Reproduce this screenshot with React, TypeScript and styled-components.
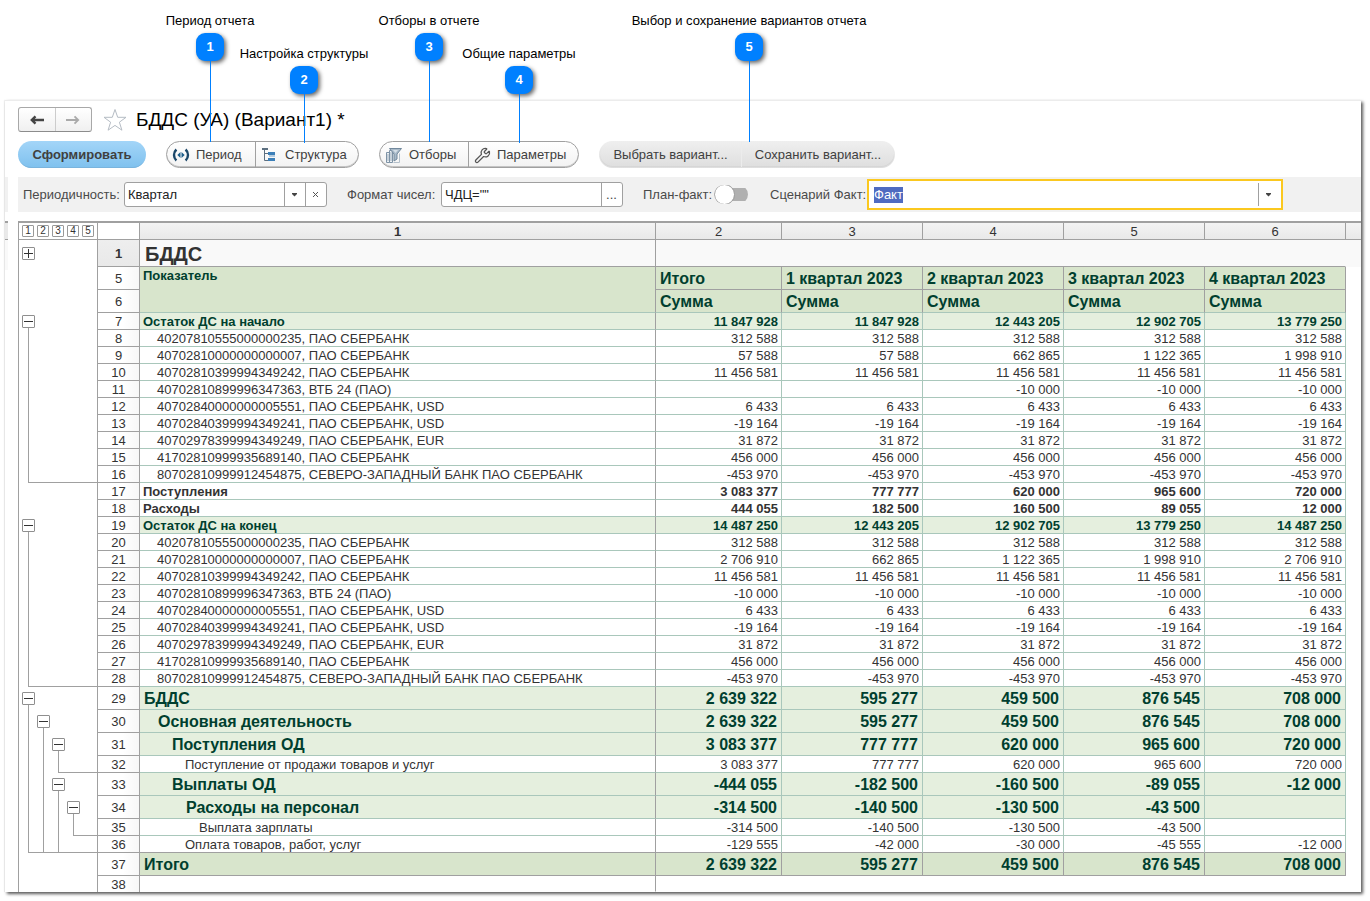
import React, { useEffect, useRef } from "react";
import styled, { createGlobalStyle, css } from "styled-components";
import { Wrench } from "lucide-react";

const GRAY = "#a0a0a0";
const GREEN_LINE = "#a9c7bb";
const GREEN_TEXT = "#003f2f";

const GlobalStyle = createGlobalStyle`
  * { box-sizing: border-box; }
  body {
    margin: 0;
    background: #fff;
    color: #333;
    font: 13px/16px "Liberation Sans", Arial, sans-serif;
  }
  button, input { font: inherit; color: inherit; margin: 0; }
`;

const Page = styled.div`
  position: relative;
  padding: 100px 9px 9px 5px;
  min-width: 1200px;
`;

/* Numbered callouts over the window */

const CalloutBox = styled.div<{ $center: number; $low?: boolean }>`
  position: absolute;
  z-index: 2;
  top: ${(p) => (p.$low ? 46 : 13)}px;
  left: ${(p) => p.$center - 134}px;
  width: 268px;
  display: flex;
  flex-direction: column;
  align-items: center;
  gap: 4px;
  color: #000;
  white-space: nowrap;
  pointer-events: none;
`;

const Badge = styled.span<{ $tail: number }>`
  position: relative;
  width: 28px;
  height: 28px;
  border-radius: 9px;
  background: #0080ff;
  box-shadow: 2px 2px 4px rgba(0, 0, 0, 0.6);
  color: #fff;
  font-weight: bold;
  line-height: 28px;
  text-align: center;

  &::after {
    content: "";
    position: absolute;
    top: 28px;
    left: 14px;
    width: 1px;
    height: ${(p) => p.$tail}px;
    background: #0080ff;
  }
`;

/* Application window */

const Window = styled.main`
  border-top: 1px solid #ececec;
  background: #fff;
  box-shadow: 2px 2px 3px rgba(0, 0, 0, 0.65), -1px 0 1px rgba(0, 0, 0, 0.06);
`;

const TitleRow = styled.header`
  display: flex;
  align-items: center;
  padding: 6px 13px 0;
  height: 31px;
`;

const NavGroup = styled.div`
  display: flex;
  width: 74px;
  height: 25px;
  border: 1px solid #a8a8a8;
  border-bottom-color: #8c8c8c;
  border-radius: 3px;
  background: linear-gradient(#fff, #f0f0f0);
`;

const NavButton = styled.button`
  flex: 1;
  display: flex;
  align-items: center;
  justify-content: center;
  padding: 0;
  border: 0;
  background: none;

  & + & { border-left: 1px solid #ccc; }
`;

const StarButton = styled.button`
  display: flex;
  margin: 0 9px 0 11px;
  padding: 0;
  border: 0;
  background: none;
`;

const Title = styled.h1`
  margin: 0;
  color: #000;
  font-size: 19px;
  line-height: 24px;
  font-weight: normal;
`;

const CommandBar = styled.div`
  display: flex;
  gap: 20px;
  padding: 9px 13px;
`;

const pill = css`
  height: 27px;
  border-radius: 14px;
`;

const PrimaryButton = styled.button`
  ${pill}
  width: 128px;
  padding: 1px 0 0;
  border: 0;
  background: linear-gradient(#a3d5f8, #7fc1ee);
  box-shadow: inset 0 -2px 0 -1px #7ab4dd;
  color: #404040;
  font-weight: bold;
`;

const ButtonGroup = styled.div<{ $flat?: boolean }>`
  ${pill}
  display: flex;
  border: 1px solid ${(p) => (p.$flat ? "transparent" : GRAY)};
  background: ${(p) => (p.$flat ? "linear-gradient(#efefef, #dedede) border-box" : "linear-gradient(#fff, #f2f2f2)")};
  box-shadow: inset 0 -1px 0 ${(p) => (p.$flat ? "#d6d6d6" : "#c4c4c4")};
`;

const GroupButton = styled.button<{ $width: number; $flat?: boolean }>`
  display: flex;
  align-items: center;
  justify-content: ${(p) => (p.$flat ? "center" : "flex-start")};
  gap: 6px;
  width: ${(p) => p.$width}px;
  padding: 1px 5px 0;
  border: 0;
  background: none;
  color: #404040;
  white-space: nowrap;

  &:not(:first-child) { border-left: 1px solid ${(p) => (p.$flat ? "#ececec" : GRAY)}; }
`;

const Split = styled.div`
  display: grid;
  grid-template-columns: 3px minmax(0, 1fr);
  column-gap: 10px;
`;

const GutterShade = styled.div`
  background: #f1f1f1;
`;

const GutterHead = styled.div`
  height: 49px;
  border-top: 2px solid ${GRAY};
  background: linear-gradient(#e9e9e9 16px, ${GRAY} 16px, ${GRAY} 17px, #f9f9f9 17px);
`;

const Params = styled.div`
  display: flex;
  align-items: center;
  gap: 20px;
  height: 35px;
  padding: 0 78px 0 5px;
  background: #f1f1f1;
`;

const Param = styled.div<{ $grow?: boolean }>`
  display: flex;
  align-items: center;
  flex: ${(p) => (p.$grow ? "1" : "none")};
`;

const ParamLabel = styled.label<{ $width: number }>`
  width: ${(p) => p.$width}px;
  color: #4a4a4a;
  white-space: nowrap;
`;

const Field = styled.div<{ $width?: number; $active?: boolean }>`
  display: flex;
  flex: ${(p) => (p.$width ? "none" : "1")};
  width: ${(p) => (p.$width ? p.$width + "px" : "auto")};
  height: ${(p) => (p.$active ? 31 : 25)}px;
  padding: ${(p) => (p.$active ? "2px" : "0")};
  border: ${(p) => (p.$active ? "2px solid #fbc81f" : "1px solid " + GRAY)};
  border-radius: ${(p) => (p.$active ? 0 : 3)}px;
  background: #fff;
`;

const FieldInput = styled.input`
  flex: 1;
  min-width: 0;
  padding: 0 3px;
  border: 0;
  outline: 0;
  background: none;
  color: #222;

  &::selection { background: #4f6bc0; color: #fff; }
`;

const FieldButton = styled.button`
  display: flex;
  align-items: center;
  justify-content: center;
  width: 21px;
  padding: 0 1px 0 0;
  border: 0;
  border-left: 1px solid ${GRAY};
  background: none;
  color: #444;
`;

const Switch = styled.input`
  appearance: none;
  display: flex;
  align-items: center;
  width: 34px;
  height: 19px;
  margin-right: 2px;
  background: linear-gradient(#b0b0b0, #b0b0b0) 6px 3px / 28px 13px no-repeat;
  border-radius: 10px;
  overflow: hidden;

  &::before {
    content: "";
    width: 19px;
    height: 19px;
    border: 1px solid #999;
    border-radius: 50%;
    background: #fff;
  }
`;

/* Spreadsheet */

const SheetArea = styled.section`
  margin-top: 9px;
`;

const Sheet = styled.table`
  width: 100%;
  table-layout: fixed;
  border-collapse: separate;
  border-spacing: 0;
  border-top: 2px solid ${GRAY};

  td, th { padding: 0; font-weight: normal; white-space: nowrap; overflow: hidden; }
`;

const Col = styled.col<{ $width?: number }>`
  width: ${(p) => (p.$width ? p.$width + "px" : "auto")};
`;

const OutlineCell = styled.td<{ $head?: boolean }>`
  border-left: 1px solid ${GRAY};
  border-right: 1px solid ${GRAY};
  ${(p) => p.$head && `border-bottom: 1px solid ${GRAY};`}
`;

const Lanes = styled.div<{ $height: number }>`
  display: grid;
  grid-template-columns: repeat(4, 15px) 16px;
  height: ${(p) => p.$height}px;
  padding-left: 2px;
`;

const line = `linear-gradient(${GRAY}, ${GRAY})`;
const laneFill: Record<string, string> = {
  ".": "none",
  "+": "none",
  "-": `${line} 7px 100% / 1px 50% no-repeat`,
  "|": `${line} 7px 0 / 1px 100% no-repeat`,
  L: `${line} 7px 0 / 1px 100% no-repeat, ${line} 7px 100% / 8px 1px no-repeat`,
  T: `${line} 7px 0 / 1px 100% no-repeat, ${line} 0 100% / 15px 1px no-repeat`,
  _: `${line} 0 100% / 16px 1px no-repeat`,
};

const Lane = styled.div<{ $kind: string }>`
  display: flex;
  align-items: center;
  padding-left: 1px;
  background: ${(p) => laneFill[p.$kind]};
`;

const Toggle = styled.button`
  display: flex;
  align-items: center;
  justify-content: center;
  width: 13px;
  height: 13px;
  padding: 0;
  border: 1px solid #8f8f8f;
  border-radius: 1px;
  background: #fff;
`;

const LevelButton = styled(Toggle)`
  width: 12px;
  height: 12px;
  border-color: #999;
  font-size: 10px;
  line-height: 10px;
`;

const ColumnHead = styled.th<{ $bold?: boolean; $plain?: boolean }>`
  height: 17px;
  border-right: 1px solid ${GRAY};
  border-bottom: 1px solid ${GRAY};
  background: ${(p) => (p.$plain ? "#fff" : "linear-gradient(#f3f3f3, #e9e9e9)")};
  line-height: 14px;

  &&& { padding-top: 2px; font-weight: ${(p) => (p.$bold ? "bold" : "normal")}; }
  &:last-child { border-right: 0; }
`;

const RowHead = styled.th<{ $current?: boolean; $last?: boolean }>`
  border-right: 1px solid ${GRAY};
  border-bottom: ${(p) => (p.$last ? "0" : `1px solid ${GRAY}`)};
  background: ${(p) => (p.$current ? "linear-gradient(#eee, #e9e9e9)" : "linear-gradient(90deg, #fff 60%, #f7f7f7)")};
  line-height: 14px;

  &&& { padding-top: 2px; font-weight: ${(p) => (p.$current ? "bold" : "normal")}; }
`;

type Tone = "title" | "head" | "group" | "big" | "bold" | "plain" | "total" | "empty";

const tones: Record<Tone, ReturnType<typeof css>> = {
  title: css`background: #f9f9f9; font-size: 20px; line-height: 24px; --edge: ${GRAY}; --pad: 5px;`,
  head: css`background: #d8e5cc; color: ${GREEN_TEXT}; font-size: 16px; line-height: 20px; --edge: ${GRAY}; --pad: 4px;`,
  group: css`background: #e5efde; color: ${GREEN_TEXT};`,
  big: css`background: #e5efde; color: ${GREEN_TEXT}; font-size: 16px; line-height: 20px; --pad: 4px;`,
  bold: css``,
  plain: css``,
  total: css`background: #d8e5cc; color: ${GREEN_TEXT}; font-size: 16px; line-height: 20px; --edge: ${GRAY}; --pad: 4px;`,
  empty: css`--edge: transparent;`,
};

const Cell = styled.td<{ $tone: Tone; $strong?: boolean; $closing?: boolean }>`
  --edge: ${GREEN_LINE};
  --pad: 3px;
  line-height: 14px;
  ${(p) => tones[p.$tone]}
  border-right: 1px solid var(--edge);
  border-bottom: 1px solid ${(p) => (p.$closing ? GRAY : "var(--edge)")};
  text-align: right;

  &&& {
    padding: 2px var(--pad) 0;
    font-weight: ${(p) => (p.$strong ? "bold" : "normal")};
  }
`;

const LabelCell = styled(Cell)<{ $indent?: number }>`
  border-right-color: ${GRAY};
  text-align: left;

  &&& { padding-left: calc(var(--pad) + ${(p) => (p.$indent || 0) * 14}px); }
`;

const TitleRest = styled(Cell)`
  border-right-color: #f9f9f9;
`;

const HeadCell = styled(Cell)<{ $low?: boolean }>`
  border-bottom-color: ${(p) => (p.$low ? GREEN_LINE : GRAY)};
  text-align: left;
`;

const IndicatorCell = styled(HeadCell)`
  font-size: 13px;
  line-height: 14px;
  vertical-align: top;
  --pad: 3px;
`;

const Rest = styled.td<{ $shade?: boolean }>`
  background: ${(p) => (p.$shade ? "#f9f9f9" : "none")};
`;

const ArrowIcon = ({ back }: { back?: boolean }) => (
  <svg width="16" height="12" viewBox="0 0 16 12" fill="none" stroke={back ? "#444" : "#aaa"} strokeWidth={back ? 2.4 : 1.8}>
    {back ? <path d="M15 6H3M6.500 2.300 2.800 6l3.700 3.700" /> : <path d="M1 6h12.500M9.500 2.300 13.200 6 9.500 9.700" />}
  </svg>
);

const StarIcon = () => (
  <svg width="24" height="24" viewBox="0 0 24 24" fill="#fff" stroke="#b5bcc4" strokeWidth="1">
    <path d="M12 1.500 14.700 9.300H23L16.400 14.200 18.900 22.200 12 17.400 5.100 22.200 7.600 14.200 1 9.300H9.300Z" />
  </svg>
);

const PeriodIcon = () => (
  <svg width="18" height="14" viewBox="0 0 18 14" fill="none">
    <path d="M4.400 1.500C1.200 4.500 1.200 9.500 4.400 12.500M13.600 1.500C16.800 4.500 16.800 9.500 13.600 12.500" stroke="#1b4769" strokeWidth="2.400" />
    <path d="M8.500 4V10L5.300 7ZM9.500 4V10L12.700 7Z" fill="#1f5f8b" />
  </svg>
);

const StructureIcon = () => (
  <svg width="18" height="16" viewBox="0 0 18 16">
    <path d="M1 1h6v2H1z" fill="#5c6f80" />
    <path d="M3.500 3v10.500H7M3.500 6.500H7" fill="none" stroke="#5c6f80" />
    <path d="M7 5h7v3H7zM7 11h7v3H7z" fill="#3c7fb8" />
    <path d="M8 8.500h6v1H8z" fill="#6f9fc6" />
  </svg>
);

const FilterIcon = () => (
  <svg width="18" height="17" viewBox="0 0 18 17">
    <path d="M1.500 5.500h3v10h-3zM4.500 3.500h3v12h-3z" fill="#eef2f5" stroke="#7e93a6" />
    <path d="M3 7v7M6 5v9" stroke="#9fb0bf" />
    <path d="M14.500 6.500v9h-6" fill="none" stroke="#b4c0cb" />
    <path d="M4.500 1.500h12L12 7V12L9 14V7Z" fill="#a9bac9" stroke="#71889c" />
    <path d="M8 3h5L10.500 6Z" fill="#d5dfe7" />
  </svg>
);

const CaretIcon = () => (
  <svg width="7" height="4" viewBox="0 0 7 4" fill="#444"><path d="M1 0h5v1L3.500 3.500 1 1Z" /></svg>
);

const CrossIcon = () => (
  <svg width="7" height="7" viewBox="0 0 7 7" stroke="#555"><path d="M1 1l5 5M6 1 1 6" /></svg>
);

const SignIcon = ({ plus }: { plus?: boolean }) => (
  <svg width="11" height="11" viewBox="0 0 11 11" stroke="#333">
    <path d={plus ? "M1 5.500h9M5.500 1v9" : "M1 5.500h9"} />
  </svg>
);

const callouts = [
  { n: 1, text: "Период отчета", center: 210, tail: 81 },
  { n: 2, text: "Настройка структуры", center: 304, tail: 49, low: true },
  { n: 3, text: "Отборы в отчете", center: 429, tail: 81 },
  { n: 4, text: "Общие параметры", center: 519, tail: 49, low: true },
  { n: 5, text: "Выбор и сохранение вариантов отчета", center: 749, tail: 81 },
];

type Row = { n: number; tone: Tone; lanes: string; label: string; indent?: number; values: string[] };

const v = (text: string) => text.split("|");
const same = (text: string) => Array(5).fill(text);

const accounts = (first: number, second: string[], vtb: string[]): Row[] =>
  [
    ["40207810555000000235, ПАО СБЕРБАНК", same("312 588")],
    ["40702810000000000007, ПАО СБЕРБАНК", second],
    ["40702810399994349242, ПАО СБЕРБАНК", same("11 456 581")],
    ["40702810899996347363, ВТБ 24 (ПАО)", vtb],
    ["40702840000000005551, ПАО СБЕРБАНК, USD", same("6 433")],
    ["40702840399994349241, ПАО СБЕРБАНК, USD", same("-19 164")],
    ["40702978399994349249, ПАО СБЕРБАНК, EUR", same("31 872")],
    ["41702810999935689140, ПАО СБЕРБАНК", same("456 000")],
    ["80702810999912454875, СЕВЕРО-ЗАПАДНЫЙ БАНК ПАО СБЕРБАНК", same("-453 970")],
  ].map(([label, values], i) => ({
    n: first + i,
    tone: "plain" as Tone,
    lanes: i === 8 ? "L____" : "|....",
    label: label as string,
    indent: 1,
    values: values as string[],
  }));

const rows: Row[] = [
  { n: 7, tone: "group", lanes: "-....", label: "Остаток ДС на начало", values: v("11 847 928|11 847 928|12 443 205|12 902 705|13 779 250") },
  ...accounts(8, v("57 588|57 588|662 865|1 122 365|1 998 910"), v("||-10 000|-10 000|-10 000")),
  { n: 17, tone: "bold", lanes: ".....", label: "Поступления", values: v("3 083 377|777 777|620 000|965 600|720 000") },
  { n: 18, tone: "bold", lanes: ".....", label: "Расходы", values: v("444 055|182 500|160 500|89 055|12 000") },
  { n: 19, tone: "group", lanes: "-....", label: "Остаток ДС на конец", values: v("14 487 250|12 443 205|12 902 705|13 779 250|14 487 250") },
  ...accounts(20, v("2 706 910|662 865|1 122 365|1 998 910|2 706 910"), same("-10 000")),
  { n: 29, tone: "big", lanes: "-....", label: "БДДС", values: v("2 639 322|595 277|459 500|876 545|708 000") },
  { n: 30, tone: "big", lanes: "|-...", label: "Основная деятельность", indent: 1, values: v("2 639 322|595 277|459 500|876 545|708 000") },
  { n: 31, tone: "big", lanes: "||-..", label: "Поступления ОД", indent: 2, values: v("3 083 377|777 777|620 000|965 600|720 000") },
  { n: 32, tone: "plain", lanes: "||L__", label: "Поступление от продажи товаров и услуг", indent: 3, values: v("3 083 377|777 777|620 000|965 600|720 000") },
  { n: 33, tone: "big", lanes: "||-..", label: "Выплаты ОД", indent: 2, values: v("-444 055|-182 500|-160 500|-89 055|-12 000") },
  { n: 34, tone: "big", lanes: "|||-.", label: "Расходы на персонал", indent: 3, values: v("-314 500|-140 500|-130 500|-43 500|") },
  { n: 35, tone: "plain", lanes: "|||L_", label: "Выплата зарплаты", indent: 4, values: v("-314 500|-140 500|-130 500|-43 500|") },
  { n: 36, tone: "plain", lanes: "LTT__", label: "Оплата товаров, работ, услуг", indent: 3, values: v("-129 555|-42 000|-30 000|-45 555|-12 000") },
  { n: 37, tone: "total", lanes: ".....", label: "Итого", values: v("2 639 322|595 277|459 500|876 545|708 000") },
];

const Outline = ({ lanes, height }: { lanes: string; height: number }) => (
  <OutlineCell>
    <Lanes $height={height}>
      {lanes.split("").map((kind, i) => (
        <Lane key={i} $kind={kind}>
          {kind === "-" && <Toggle aria-label="Свернуть"><SignIcon /></Toggle>}
          {kind === "+" && <Toggle aria-label="Развернуть"><SignIcon plus /></Toggle>}
        </Lane>
      ))}
    </Lanes>
  </OutlineCell>
);

const ReportSheet = () => (
  <Sheet>
    <colgroup>
      <Col $width={80} />
      <Col $width={42} />
      <Col />
      <Col $width={126} />
      <Col $width={141} />
      <Col $width={141} />
      <Col $width={141} />
      <Col $width={141} />
      <Col $width={15} />
    </colgroup>
    <thead>
      <tr>
        <OutlineCell $head>
          <Lanes $height={16}>
            {[1, 2, 3, 4, 5].map((n) => (
              <Lane key={n} $kind="."><LevelButton>{n}</LevelButton></Lane>
            ))}
          </Lanes>
        </OutlineCell>
        <ColumnHead $plain />
        {[1, 2, 3, 4, 5, 6].map((n) => (
          <ColumnHead key={n} scope="col" $bold={n === 1}>{n}</ColumnHead>
        ))}
        <ColumnHead />
      </tr>
    </thead>
    <tbody>
      <tr>
        <Outline lanes="+...." height={27} />
        <RowHead scope="row" $current>1</RowHead>
        <LabelCell $tone="title" $strong>БДДС</LabelCell>
        <TitleRest $tone="title" colSpan={5} />
        <Rest $shade />
      </tr>
      <tr>
        <Outline lanes="....." height={23} />
        <RowHead scope="row">5</RowHead>
        <IndicatorCell $tone="head" $strong $low rowSpan={2}>Показатель</IndicatorCell>
        {["Итого", "1 квартал 2023", "2 квартал 2023", "3 квартал 2023", "4 квартал 2023"].map((t) => (
          <HeadCell key={t} $tone="head" $strong>{t}</HeadCell>
        ))}
        <Rest />
      </tr>
      <tr>
        <Outline lanes="....." height={23} />
        <RowHead scope="row">6</RowHead>
        {[1, 2, 3, 4, 5].map((i) => (
          <HeadCell key={i} $tone="head" $strong $low>Сумма</HeadCell>
        ))}
        <Rest />
      </tr>
      {rows.map((r) => {
        const tall = r.tone === "big" || r.tone === "total";
        const strong = tall || r.tone === "group" || r.tone === "bold";
        return (
          <tr key={r.n}>
            <Outline lanes={r.lanes} height={tall ? 23 : 17} />
            <RowHead scope="row">{r.n}</RowHead>
            <LabelCell $tone={r.tone} $strong={strong} $indent={r.indent} $closing={r.n === 36}>{r.label}</LabelCell>
            {r.values.map((value, i) => (
              <Cell key={i} $tone={r.tone} $strong={strong} $closing={r.n === 36}>{value}</Cell>
            ))}
            <Rest />
          </tr>
        );
      })}
      <tr>
        <Outline lanes="....." height={16} />
        <RowHead scope="row" $last>38</RowHead>
        <LabelCell $tone="empty" />
        <Rest colSpan={6} />
      </tr>
    </tbody>
  </Sheet>
);

export default function App() {
  const scenario = useRef<HTMLInputElement>(null);

  useEffect(() => {
    scenario.current?.focus();
    scenario.current?.select();
  }, []);

  return (
    <Page>
      <GlobalStyle />
      {callouts.map((c) => (
        <CalloutBox key={c.n} $center={c.center} $low={c.low}>
          <span>{c.text}</span>
          <Badge $tail={c.tail}>{c.n}</Badge>
        </CalloutBox>
      ))}

      <Window>
        <TitleRow>
          <NavGroup>
            <NavButton aria-label="Назад"><ArrowIcon back /></NavButton>
            <NavButton aria-label="Вперед"><ArrowIcon /></NavButton>
          </NavGroup>
          <StarButton aria-label="В избранное"><StarIcon /></StarButton>
          <Title>БДДС (УА) (Вариант1) *</Title>
        </TitleRow>

        <CommandBar>
          <PrimaryButton>Сформировать</PrimaryButton>
          <ButtonGroup>
            <GroupButton $width={88}><PeriodIcon />Период</GroupButton>
            <GroupButton $width={103}><StructureIcon />Структура</GroupButton>
          </ButtonGroup>
          <ButtonGroup>
            <GroupButton $width={88}><FilterIcon />Отборы</GroupButton>
            <GroupButton $width={110}><Wrench size={17} strokeWidth={1.8} color="#555" />Параметры</GroupButton>
          </ButtonGroup>
          <ButtonGroup $flat>
            <GroupButton $width={141} $flat>Выбрать вариант...</GroupButton>
            <GroupButton $width={153} $flat>Сохранить вариант...</GroupButton>
          </ButtonGroup>
        </CommandBar>

        <Split>
          <GutterShade />
          <Params>
            <Param>
              <ParamLabel htmlFor="period" $width={101}>Периодичность:</ParamLabel>
              <Field $width={203}>
                <FieldInput id="period" defaultValue="Квартал" />
                <FieldButton aria-label="Выбрать"><CaretIcon /></FieldButton>
                <FieldButton aria-label="Очистить"><CrossIcon /></FieldButton>
              </Field>
            </Param>
            <Param>
              <ParamLabel htmlFor="format" $width={94}>Формат чисел:</ParamLabel>
              <Field $width={182}>
                <FieldInput id="format" defaultValue={'ЧДЦ=""'} />
                <FieldButton>...</FieldButton>
              </Field>
            </Param>
            <Param>
              <ParamLabel htmlFor="planfact" $width={71}>План-факт:</ParamLabel>
              <Switch id="planfact" type="checkbox" role="switch" />
            </Param>
            <Param $grow>
              <ParamLabel htmlFor="scenario" $width={97}>Сценарий Факт:</ParamLabel>
              <Field $active>
                <FieldInput id="scenario" ref={scenario} defaultValue="Факт" />
                <FieldButton aria-label="Выбрать сценарий"><CaretIcon /></FieldButton>
              </Field>
            </Param>
          </Params>
        </Split>

        <SheetArea>
          <Split>
            <GutterHead />
            <ReportSheet />
          </Split>
        </SheetArea>
      </Window>
    </Page>
  );
}
